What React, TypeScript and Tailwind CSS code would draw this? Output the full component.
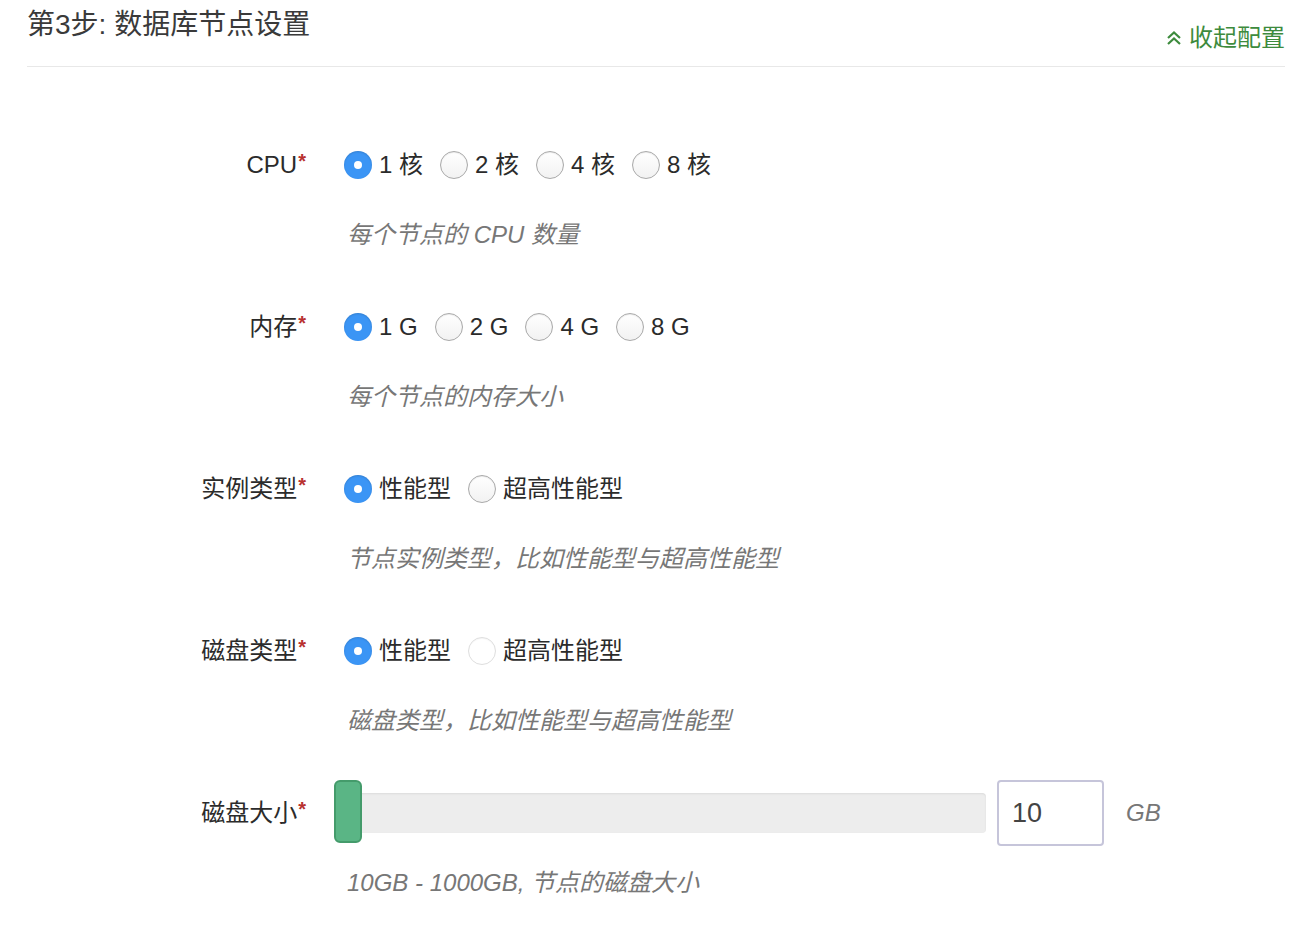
import { useState } from "react";

type Option = { label: string; disabled?: boolean };

const font = "font-['Liberation_Sans','Noto_Sans_CJK_SC',sans-serif]";

function Radio({ checked, disabled }: { checked: boolean; disabled?: boolean }) {
  if (checked) {
    return (
      <span className="flex h-[28px] w-[28px] shrink-0 items-center justify-center rounded-full bg-[#3b95f5] shadow-[inset_0_1px_2px_rgba(0,0,0,0.15)]">
        <span className="h-[8px] w-[8px] rounded-full bg-white" />
      </span>
    );
  }
  return (
    <span
      className={
        disabled
          ? "h-[28px] w-[28px] shrink-0 rounded-full border border-[#dedede] bg-white shadow-[inset_0_1px_1px_rgba(0,0,0,0.04)]"
          : "h-[28px] w-[28px] shrink-0 rounded-full border border-[#a9a9a9] bg-gradient-to-b from-white to-[#f2f2f2] shadow-[inset_0_1px_1px_rgba(0,0,0,0.08)]"
      }
    />
  );
}

function RadioGroup({ options }: { options: Option[] }) {
  const [value, setValue] = useState(0);
  return (
    <div className="ml-[10px] flex h-9 items-center gap-[17px]">
      {options.map((o, i) => (
        <button
          key={o.label}
          type="button"
          onClick={() => !o.disabled && setValue(i)}
          className="flex items-center gap-[7px] text-[24px] leading-none text-[#2b2b2b]"
        >
          <Radio checked={value === i} disabled={o.disabled} />
          <span>{o.label}</span>
        </button>
      ))}
    </div>
  );
}

function Label({ text }: { text: string }) {
  return (
    <div className="w-[279px] shrink-0 text-right text-[24px] leading-none text-[#2b2b2b]">
      {text}
      <span className="relative -top-[5px] ml-[1px] text-[20px] font-bold text-[#b8312f]">*</span>
    </div>
  );
}

function Help({ text, className }: { text: string; className?: string }) {
  return (
    <div className={"flex h-9 items-center pl-[320px] text-[24px] italic text-[#777] " + (className ?? "")}>
      {text}
    </div>
  );
}

export default function App() {
  const [size, setSize] = useState("10");

  const fields = [
    {
      label: "CPU",
      options: [{ label: "1 核" }, { label: "2 核" }, { label: "4 核" }, { label: "8 核" }],
      help: "每个节点的 CPU 数量",
    },
    {
      label: "内存",
      options: [{ label: "1 G" }, { label: "2 G" }, { label: "4 G" }, { label: "8 G" }],
      help: "每个节点的内存大小",
    },
    {
      label: "实例类型",
      options: [{ label: "性能型" }, { label: "超高性能型" }],
      help: "节点实例类型，比如性能型与超高性能型",
    },
    {
      label: "磁盘类型",
      options: [{ label: "性能型" }, { label: "超高性能型", disabled: true }],
      help: "磁盘类型，比如性能型与超高性能型",
    },
  ];

  return (
    <div className={"min-h-screen w-full bg-white " + font}>
      <div className="pl-[27px] pr-[29px]">
        <header className="flex h-[67px] items-start justify-between border-b border-[#e8e8e8]">
          <h2 className="mt-[6px] text-[28px] leading-[38px] text-[#3a3a3a]">第3步: 数据库节点设置</h2>
          <a className="mt-[23px] flex items-center gap-[7px] text-[24px] leading-[30px] text-[#3d8b3d]">
            <svg width="16" height="16" viewBox="0 0 16 16" fill="none" stroke="#3d8b3d" strokeWidth="2.2">
              <path d="M2 8 L8 2.5 L14 8" />
              <path d="M2 14 L8 8.5 L14 14" />
            </svg>
            收起配置
          </a>
        </header>

        <div className="flex flex-col pt-[80px]">
          {fields.map((f) => (
            <div key={f.label} className="mb-[56px] flex flex-col">
              <div className="flex h-9 items-center gap-[28px]">
                <Label text={f.label} />
                <RadioGroup options={f.options} />
              </div>
              <Help text={f.help} className="mt-[34px]" />
            </div>
          ))}

          <div className="-mt-[15px] flex flex-col">
            <div className="flex h-[66px] items-center gap-[28px]">
              <Label text="磁盘大小" />
              <div className="flex items-center">
                <div className="relative flex h-[66px] w-[652px] items-center">
                  <div className="ml-[1px] h-[40px] w-full rounded-[4px] bg-[#ededed] shadow-[inset_0_1px_2px_rgba(0,0,0,0.08)]" />
                  <div className="absolute left-0 top-0 h-[63px] w-[28px] rounded-[6px] border-2 border-[#449b6b] bg-[#5ab585]" />
                </div>
                <input
                  value={size}
                  onChange={(e) => setSize(e.target.value)}
                  className="ml-[11px] h-[66px] w-[107px] rounded-[4px] border-2 border-[#c6c5da] bg-white pl-[13px] text-[27px] text-[#444] outline-none"
                />
                <span className="ml-[22px] text-[24px] italic text-[#777]">GB</span>
              </div>
            </div>
            <Help text="10GB - 1000GB, 节点的磁盘大小" className="mt-[19px]" />
          </div>
        </div>
      </div>
    </div>
  );
}
